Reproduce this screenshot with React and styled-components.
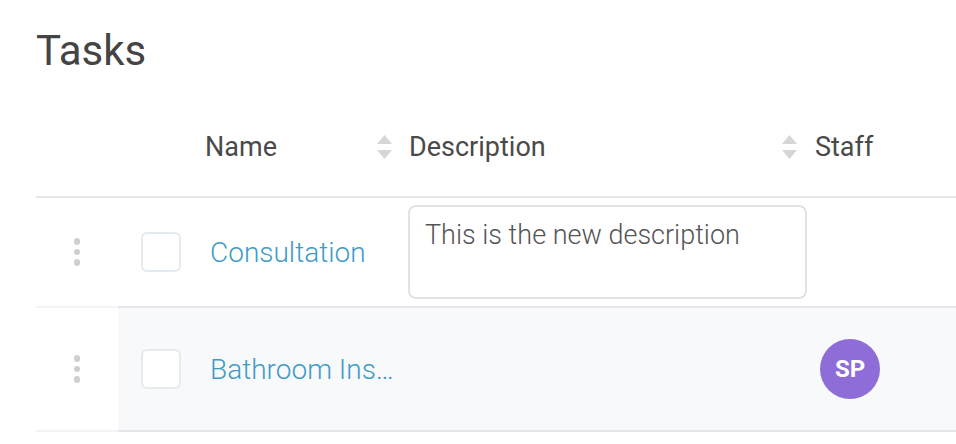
import React from "react";
import styled, { createGlobalStyle } from "styled-components";

const GlobalStyle = createGlobalStyle`
  html, body {
    margin: 0;
    padding: 0;
    background: #fff;
    overflow: hidden;
  }
  body {
    font-family: Roboto, "Liberation Sans", Arial, sans-serif;
  }
`;

const COLS = "82px 78px 204px 410px 400px";

const Page = styled.div`
  padding-left: 36px;
  width: 1300px;
`;

const Title = styled.h1`
  margin: 0;
  padding-top: 30px;
  font-size: 42px;
  line-height: 42px;
  font-weight: 400;
  color: #444;
`;

const Table = styled.div`
  margin-top: 26px;
`;

const HeaderRow = styled.div`
  display: grid;
  grid-template-columns: ${COLS};
  height: 98px;
  border-bottom: 2px solid #e6e6ea;
`;

const HeadCell = styled.div`
  display: flex;
  align-items: center;
  justify-content: space-between;
  padding-left: ${(p) => p.$pl || 0}px;
  padding-right: ${(p) => p.$pr || 0}px;
  font-size: 27px;
  color: #4a4a4a;
`;

const Row = styled.div`
  display: grid;
  grid-template-columns: ${COLS};
  height: ${(p) => p.$h}px;
`;

const Cell = styled.div`
  display: flex;
  align-items: center;
  min-width: 0;
  padding-left: ${(p) => p.$pl || 0}px;
  padding-right: ${(p) => p.$pr || 0}px;
  background: ${(p) => (p.$shade ? "#f8f9fb" : "#fff")};
  border-bottom: 2px solid ${(p) => (p.$light ? "#f3f3f5" : "#e6e6ea")};
`;

const DragCell = styled(Cell)`
  justify-content: center;
`;

const Dots = styled.div`
  display: flex;
  flex-direction: column;
  gap: 4px;
  span {
    width: 6.5px;
    height: 6.5px;
    border-radius: 50%;
    background: #cfcfcf;
  }
`;

const Check = styled.div`
  width: 36px;
  height: 36px;
  border: 2px solid #e5eaee;
  border-radius: 6px;
  background: #fff;
`;

const NameLink = styled.a`
  display: block;
  font-size: 28px;
  font-weight: 300;
  color: #3f9bc6;
  white-space: nowrap;
  overflow: hidden;
  text-overflow: ellipsis;
  text-decoration: none;
  cursor: pointer;
`;

const DescBox = styled.textarea`
  box-sizing: border-box;
  width: 399px;
  height: 94px;
  flex: none;
  margin-top: -1px;
  padding: 12px 15px;
  border: 2px solid #e2e2e2;
  border-radius: 8px;
  resize: none;
  outline: none;
  font-family: Roboto, "Liberation Sans", Arial, sans-serif;
  font-size: 27px;
  font-weight: 300;
  color: #555;
  background: #fff;
`;

const Avatar = styled.div`
  width: 60px;
  height: 60px;
  border-radius: 50%;
  background: #8e6dd9;
  color: #fff;
  font-size: 24px;
  font-weight: 700;
  display: flex;
  align-items: center;
  justify-content: center;
`;

const SortIcon = () => (
  <svg width="15" height="24" viewBox="0 0 15 24">
    <path d="M7.5 0 L15 9 L0 9 Z" fill="#d6d6d6" />
    <path d="M0 15 L15 15 L7.5 24 Z" fill="#d6d6d6" />
  </svg>
);

const Handle = () => (
  <Dots>
    <span />
    <span />
    <span />
  </Dots>
);

const tasks = [
  { name: "Consultation", desc: "This is the new description", staff: null, h: 110 },
  { name: "Bathroom Installation", desc: null, staff: "SP", h: 124 },
];

export default function App() {
  return (
    <>
      <GlobalStyle />
      <Page>
        <Title>Tasks</Title>
        <Table>
          <HeaderRow>
            <HeadCell />
            <HeadCell />
            <HeadCell $pl={9} $pr={8}>
              Name
              <SortIcon />
            </HeadCell>
            <HeadCell $pl={9} $pr={13}>
              Description
              <SortIcon />
            </HeadCell>
            <HeadCell $pl={5}>Staff</HeadCell>
          </HeaderRow>
          {tasks.map((t, i) => (
            <Row key={t.name} $h={t.h}>
              <DragCell $light>
                <Handle />
              </DragCell>
              <Cell $pl={23} $shade={i === 1}>
                <Check />
              </Cell>
              <Cell $pl={14} $pr={2} $shade={i === 1}>
                <NameLink>{t.name}</NameLink>
              </Cell>
              <Cell $pl={8} $shade={i === 1}>
                {t.desc && <DescBox defaultValue={t.desc} />}
              </Cell>
              <Cell $pl={10} $shade={i === 1}>
                {t.staff && <Avatar>{t.staff}</Avatar>}
              </Cell>
            </Row>
          ))}
        </Table>
      </Page>
    </>
  );
}
